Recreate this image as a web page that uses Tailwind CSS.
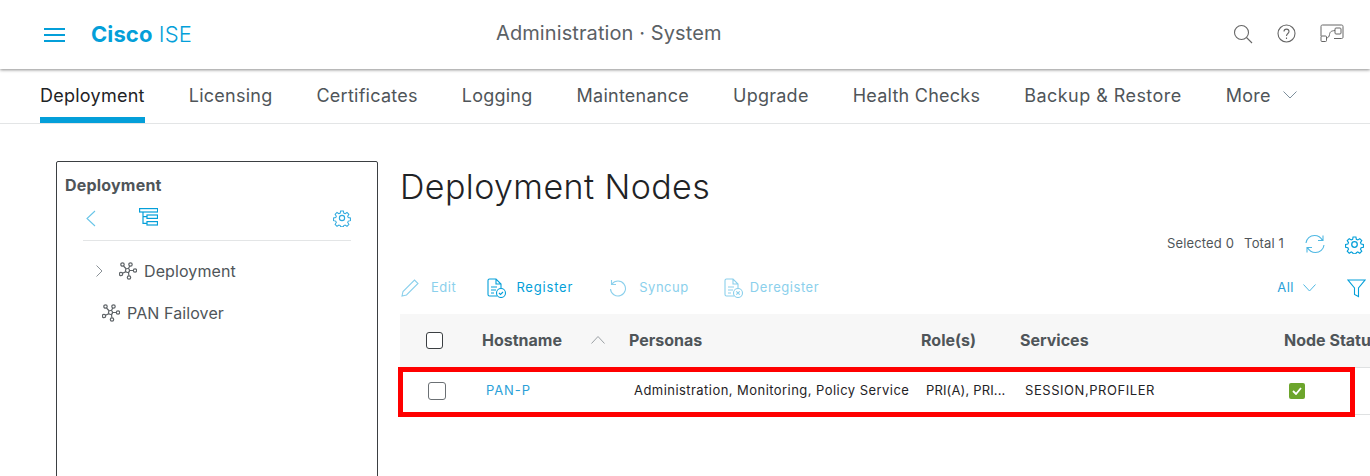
<!DOCTYPE html>
<html lang="en">
<head>
    <meta charset="UTF-8">
    <title>Cisco ISE - Deployment</title>
    <script src="https://cdn.jsdelivr.net/npm/@tailwindcss/browser@4"></script>
</head>
<body class="h-[476px] w-[1370px] overflow-hidden bg-white font-['Inter',sans-serif] text-[#4f5559]">
    <!-- Header -->
    <header class="relative z-10 h-[69px] bg-white shadow-[0_1px_3px_rgba(0,0,0,0.45)] flex items-center">
        <svg class="ml-[44px] w-[22px] h-[16px]" viewBox="0 0 22 16" fill="none" stroke="#049fd9" stroke-width="2"><path d="M0 2h21M0 8h21M0 14h21"/></svg>
        <div class="ml-[25px] w-[405px] text-[22px] tracking-[0.1px] text-[#049fd9]"><span class="font-bold">Cisco</span> <span class="font-light">ISE</span></div>
        <div class="pb-[4px] text-[20px] text-[#5b6165] tracking-[0.1px]">Administration · System</div>
        <div class="ml-auto pb-[2px] flex items-center">
            <svg class="w-[20px] h-[20px]" viewBox="0 0 20 20" fill="none" stroke="#666" stroke-width="1.1"><circle cx="8.5" cy="8.5" r="7"/><path d="M13.5 13.5 19 19"/></svg>
            <svg class="ml-[24px] w-[19px] h-[19px]" viewBox="0 0 19 19" fill="none" stroke="#666" stroke-width="1.1"><circle cx="9.5" cy="9.5" r="8.5"/><path d="M7 7.5c0-3.200 5-3.200 5 0 0 2-2.500 2-2.500 4.500M9.500 13.500v1.500"/></svg>
            <svg class="ml-[24px] mr-[26px] w-[24px] h-[19px]" viewBox="0 0 24 19" fill="none" stroke="#666" stroke-width="1"><path d="M1 12V2.500C1 1.500 1.500 1 2.500 1h19c1 0 1.500.5 1.500 1.500V13c0 1-.5 1.500-1.500 1.500H14"/><rect x="1" y="12" width="5.500" height="5.500" rx="1"/><rect x="15" y="4" width="6" height="6" rx="1"/><path d="M6.500 14c2-.5 2.500-1 3-3.500s1-3.500 5.500-4"/></svg>
        </div>
    </header>

    <!-- Tabs -->
    <nav class="h-[55px] border-b border-[#e3e5e6] pl-[40px] flex text-[18px] tracking-[0.25px] gap-[44px]">
        <a class="h-[54px] pt-[13px] border-b-[6px] border-[#049fd9] text-[#1f2326]">Deployment</a>
        <a class="pt-[13px]">Licensing</a>
        <a class="pt-[13px]">Certificates</a>
        <a class="pt-[13px]">Logging</a>
        <a class="pt-[13px]">Maintenance</a>
        <a class="pt-[13px]">Upgrade</a>
        <a class="pt-[13px]">Health Checks</a>
        <a class="pt-[13px] tracking-[0.45px]">Backup &amp; Restore</a>
        <a class="pt-[13px] flex items-start gap-[12px]">More
            <svg class="mt-[9px] w-[14px] h-[8px]" viewBox="0 0 14 8" fill="none" stroke="#7d8f9c"><path d="M.5.5 7 7 13.500.5"/></svg>
        </a>
    </nav>

    <main class="flex pl-[56px] pt-[37px]">
        <!-- Left panel -->
        <aside class="w-[322px] h-[330px] shrink-0 border border-[#3b3f42] rounded-t-[2px] pt-[13px]">
            <h2 class="ml-[8px] text-[16px] leading-[20px] font-bold tracking-[0.2px] text-[#4f5559]">Deployment</h2>
            <div class="mx-[26px] h-[46px] border-b border-[#e3e5e6] flex items-start pt-[13px]">
                <svg class="ml-[3px] mt-[2px] w-[10px] h-[17px]" viewBox="0 0 10 17" fill="none" stroke="#68c5e8" stroke-width="1.100"><path d="M9 1 1 8.500 9 16"/></svg>
                <svg class="ml-[43px] w-[19px] h-[18px]" viewBox="0 0 19 18" fill="none" stroke="#049fd9" stroke-width="1.200"><rect x=".6" y=".6" width="18" height="3.400"/><rect x="8" y="7" width="10.500" height="3.400"/><rect x="8" y="13.600" width="10.500" height="3.400"/><path d="M4 4v11.300h4M4 8.700h4"/></svg>
                <svg class="ml-auto mr-[0px] mt-[1px] w-[18px] h-[18px]" viewBox="0 0 24 24" fill="none" stroke="#2fa9de" stroke-width="1.500"><circle cx="12" cy="12" r="3.500"/><path d="M10 1.500h4l.6 3.200 2 .9 2.800-1.800 2.800 2.800-1.800 2.800.9 2 3.200.6v4l-3.200.6-.9 2 1.800 2.800-2.800 2.800-2.800-1.800-2 .9-.6 1.700h-4l-.6-1.700-2-.9-2.800 1.800-2.800-2.800 1.800-2.800-.9-2-3.200-.6v-4l3.200-.6.9-2-1.800-2.800 2.800-2.800 2.800 1.800 2-.9z" transform="translate(1.200 1.200) scale(.9)"/></svg>
            </div>
            <div class="ml-[39px] mt-[19px] h-[22px] flex items-center text-[16px] tracking-[0.1px]">
                <svg class="w-[7px] h-[12px]" viewBox="0 0 7 12" fill="none" stroke="#8a9197"><path d="M.5.5 6 6 .5 11.500"/></svg>
                <svg class="ml-[16px] w-[18px] h-[18px]" viewBox="0 0 18 18" fill="none" stroke="#5f6468" stroke-width="1.200"><circle cx="3.500" cy="2.500" r="1.700"/><circle cx="11.500" cy="2.500" r="1.700"/><circle cx="2" cy="12" r="1.700"/><circle cx="16" cy="8.500" r="1.700"/><circle cx="10" cy="15.500" r="1.700"/><circle cx="8.500" cy="8.500" r="2"/><path d="M4.500 4 7.300 7M10.800 4 9.300 6.700M10.500 8.500h3.800M3.500 11.200l3.500-1.600M9.500 10.500l.4 3.300"/></svg>
                <span class="ml-[7px]">Deployment</span>
            </div>
            <div class="ml-[45px] mt-[20px] h-[22px] flex items-center text-[16px] tracking-[0.1px]">
                <svg class="w-[18px] h-[18px]" viewBox="0 0 18 18" fill="none" stroke="#5f6468" stroke-width="1.200"><circle cx="3.500" cy="2.500" r="1.700"/><circle cx="11.500" cy="2.500" r="1.700"/><circle cx="2" cy="12" r="1.700"/><circle cx="16" cy="8.500" r="1.700"/><circle cx="10" cy="15.500" r="1.700"/><circle cx="8.500" cy="8.500" r="2"/><path d="M4.500 4 7.300 7M10.800 4 9.300 6.700M10.500 8.500h3.800M3.500 11.200l3.500-1.600M9.500 10.500l.4 3.300"/></svg>
                <span class="ml-[7px]">PAN Failover</span>
            </div>
        </aside>

        <!-- Content -->
        <section class="relative ml-[22px] w-[970px] shrink-0">
            <h1 class="mt-[8px] h-[36px] text-[34px] leading-[36px] font-light tracking-[0.4px] text-[#1f2326]">Deployment Nodes</h1>

            <div class="mt-[28px] h-[22px] flex items-center text-[13px] tracking-[0.15px]">
                <span class="ml-[767px]">Selected 0</span>
                <span class="ml-[10px]">Total 1</span>
                <svg class="ml-[21px] w-[20px] h-[20px]" viewBox="0 0 20 20" fill="none" stroke="#4fb8e3" stroke-width="1.100"><path d="M1 9C1.500 4.500 5 1.500 9.500 1.500c3.500 0 6.500 2 8 5M18 1.500v5h-5M19 11c-.5 4.500-4 7.500-8.500 7.500-3.500 0-6.500-2-8-5M2 18.500v-5h5"/></svg>
                <svg class="ml-[20px] w-[19px] h-[19px]" viewBox="0 0 24 24" fill="none" stroke="#049fd9" stroke-width="1.600"><circle cx="12" cy="12" r="3.500"/><path d="M10 1.500h4l.6 3.200 2 .9 2.800-1.800 2.800 2.800-1.800 2.800.9 2 3.200.6v4l-3.200.6-.9 2 1.800 2.800-2.800 2.800-2.800-1.800-2 .9-.6 1.700h-4l-.6-1.700-2-.9-2.800 1.800-2.800-2.800 1.800-2.800-.9-2-3.200-.6v-4l3.200-.6.9-2-1.800-2.800 2.800-2.800 2.800 1.800 2-.9z" transform="translate(1.200 1.200) scale(.9)"/></svg>
            </div>

            <!-- Toolbar -->
            <div class="mt-[21px] h-[24px] flex items-center text-[13px] tracking-[0.55px] text-[#8bd0ec]">
                <svg class="ml-[1px] w-[18px] h-[18px]" viewBox="0 0 18 18" fill="none" stroke="#8bd0ec" stroke-width="1.100"><path d="M1 17l1-4.500L13.500 1l3.500 3.500L5.500 16z"/></svg>
                <span class="ml-[12px]">Edit</span>
                <svg class="ml-[31px] w-[20px] h-[20px]" viewBox="0 0 20 20" fill="none" stroke="#049fd9" stroke-width="1.100"><path d="M10 18H2.500C1.500 18 1 17.500 1 16.500v-14C1 1.500 1.500 1 2.500 1H9l5 5v4M9 1v5h5"/><path d="M4 9h6M4 12h5M4 15h3"/><circle cx="14" cy="15" r="4.500"/><path d="M12 15l1.500 1.500L16 14"/></svg>
                <span class="ml-[9px] text-[#049fd9] tracking-[0.8px]">Register</span>
                <svg class="ml-[36px] w-[18px] h-[18px]" viewBox="0 0 18 18" fill="none" stroke="#8bd0ec" stroke-width="1.100"><path d="M3 5a7.500 7.500 0 1 1-1.500 5M2.500 1v4.500H7"/></svg>
                <span class="ml-[12px]">Syncup</span>
                <svg class="ml-[35px] w-[20px] h-[20px]" viewBox="0 0 20 20" fill="none" stroke="#8bd0ec" stroke-width="1.100"><path d="M10 18H2.500C1.500 18 1 17.500 1 16.500v-14C1 1.500 1.500 1 2.500 1H9l5 5v4M9 1v5h5"/><path d="M4 9h6M4 12h5M4 15h3"/><circle cx="14" cy="15" r="4.500"/><path d="M12.300 13.300l3.400 3.400M15.700 13.300l-3.400 3.400"/></svg>
                <span class="ml-[6px]">Deregister</span>
                <span class="ml-[458px] text-[#2b9fd8]">All</span>
                <svg class="ml-[9px] w-[13px] h-[8px]" viewBox="0 0 13 8" fill="none" stroke="#4fb8e3"><path d="M.5.5 6.500 7 12.500.5"/></svg>
                <svg class="ml-[31px] w-[19px] h-[19px]" viewBox="0 0 19 19" fill="none" stroke="#049fd9" stroke-width="1.100"><path d="M1 1h17l-6.500 8v8.500l-4-2V9z"/></svg>
            </div>

            <!-- Table -->
            <div class="mt-[14px] text-[13px]">
                <div class="h-[54px] pb-[2px] bg-[#f7f7f7] border-b border-[#dfe1e2] flex items-center text-[16px] font-bold text-[#4f5559] whitespace-nowrap">
                    <span class="shrink-0 ml-[26px] mt-[2px] w-[17px] h-[17px] rounded-[3px] border border-[#3b3f42] bg-white"></span>
                    <span class="shrink-0 ml-[39px] w-[109px]">Hostname</span>
                    <svg class="shrink-0 w-[14px] h-[8px]" viewBox="0 0 14 8" fill="none" stroke="#9aa0a4"><path d="M.5 7.500 7 .5l6.500 7"/></svg>
                    <span class="shrink-0 ml-[24px] w-[292px]">Personas</span>
                    <span class="shrink-0 w-[99px]">Role(s)</span>
                    <span class="shrink-0 w-[264px]">Services</span>
                    <span class="shrink-0">Node Status</span>
                </div>
                <div class="h-[47px] border-b border-[#dfe1e2] flex items-center text-[#1f2326] tracking-[0.45px] whitespace-nowrap">
                    <span class="ml-[28px] w-[18px] h-[18px] rounded-[3px] border border-[#6b7074] bg-white"></span>
                    <span class="ml-[40px] w-[148px] text-[#2b9fd8] tracking-[0.9px]">PAN-P</span>
                    <span class="w-[292px]">Administration, Monitoring, Policy Service</span>
                    <span class="w-[99px] tracking-[0.15px]">PRI(A), PRI...</span>
                    <span class="w-[264px] tracking-[0.55px]">SESSION,PROFILER</span>
                    <span class="w-[16px] h-[16px] rounded-[2px] bg-[#6ca52c] flex items-center justify-center">
                        <svg class="w-[10px] h-[8px]" viewBox="0 0 10 8" fill="none" stroke="#fff" stroke-width="1.800"><path d="M1 4l3 3 5-6"/></svg>
                    </span>
                </div>
            </div>

            <!-- Red highlight over the row -->
            <div class="absolute left-[-2px] top-[206px] w-[957px] h-[50px] border-[5px] border-[#ff0000]"></div>
        </section>
    </main>
</body>
</html>
